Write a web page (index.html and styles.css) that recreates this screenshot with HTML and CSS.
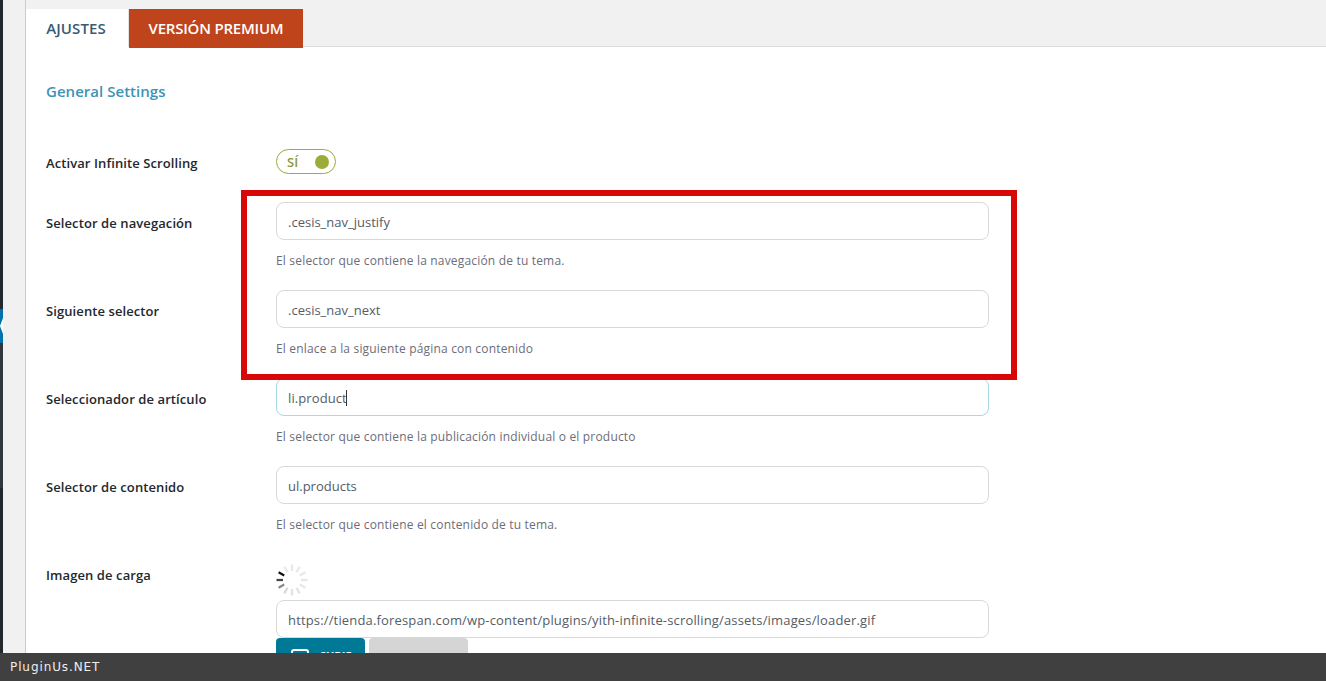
FILE: index.html
```html
<!DOCTYPE html>
<html lang="es">
<head>
<meta charset="utf-8">
<title>Ajustes</title>
<link rel="stylesheet" href="styles.css">
</head>
<body>
<div class="admin">
  <aside class="sidebar">
    <div class="side-top"></div>
    <div class="side-active"></div>
    <div class="side-sub"></div>
    <div class="side-rest"></div>
  </aside>
  <main class="content">
    <nav class="tabs">
      <a class="tab tab-active">AJUSTES</a>
      <a class="tab tab-premium">VERSIÓN PREMIUM</a>
    </nav>
    <section class="panel">
      <h2 class="section-title">General Settings</h2>
      <div class="row row-toggle">
        <label class="label">Activar Infinite Scrolling</label>
        <div class="field">
          <div class="toggle"><span class="toggle-text">SÍ</span><span class="toggle-dot"></span></div>
        </div>
      </div>
      <div class="row">
        <label class="label">Selector de navegación</label>
        <div class="field">
          <div class="input">.cesis_nav_justify</div>
          <p class="hint">El selector que contiene la navegación de tu tema.</p>
        </div>
      </div>
      <div class="row">
        <label class="label">Siguiente selector</label>
        <div class="field">
          <div class="input">.cesis_nav_next</div>
          <p class="hint">El enlace a la siguiente página con contenido</p>
        </div>
      </div>
      <div class="row">
        <label class="label">Seleccionador de artículo</label>
        <div class="field">
          <div class="input input-focus">li.product<span class="caret"></span></div>
          <p class="hint">El selector que contiene la publicación individual o el producto</p>
        </div>
      </div>
      <div class="row">
        <label class="label">Selector de contenido</label>
        <div class="field">
          <div class="input">ul.products</div>
          <p class="hint">El selector que contiene el contenido de tu tema.</p>
        </div>
      </div>
      <div class="row row-image">
        <label class="label">Imagen de carga</label>
        <div class="field">
          <svg class="spinner" width="34" height="34" viewBox="-17 -17 34 34" fill="none" stroke-width="2.2">
            <line x1="0" y1="-15.5" x2="0" y2="-9" stroke="#e8e8e8"/>
            <line x1="7.7" y1="-13.4" x2="4.5" y2="-7.8" stroke="#e8e8e8"/>
            <line x1="13.4" y1="-7.7" x2="7.8" y2="-4.5" stroke="#e8e8e8"/>
            <line x1="15.5" y1="0" x2="9" y2="0" stroke="#e6e6e6"/>
            <line x1="13.4" y1="7.7" x2="7.8" y2="4.5" stroke="#e6e6e6"/>
            <line x1="7.7" y1="13.4" x2="4.5" y2="7.8" stroke="#e2e2e2"/>
            <line x1="0" y1="15.5" x2="0" y2="9" stroke="#e2e2e2"/>
            <line x1="-7.7" y1="13.4" x2="-4.5" y2="7.8" stroke="#d8d8d8"/>
            <line x1="-13.4" y1="7.7" x2="-7.8" y2="4.5" stroke="#888"/>
            <line x1="-15.5" y1="0" x2="-9" y2="0" stroke="#444"/>
            <line x1="-13.4" y1="-7.7" x2="-7.8" y2="-4.5" stroke="#111"/>
            <line x1="-7.7" y1="-13.4" x2="-4.5" y2="-7.8" stroke="#e8e8e8"/>
          </svg>
          <div class="input input-url">https://tienda.forespan.com/wp-content/plugins/yith-infinite-scrolling/assets/images/loader.gif</div>
          <div class="buttons">
            <div class="btn btn-upload">
              <svg class="btn-icon" width="18" height="16" viewBox="0 0 18 16" fill="none" stroke="#fff" stroke-width="2"><rect x="1" y="1" width="16" height="14" rx="2"/></svg>
              <span>SUBIR</span>
            </div>
            <div class="btn btn-reset"></div>
          </div>
        </div>
      </div>
    </section>
  </main>
</div>
<div class="highlight"></div>
<footer class="footer">PluginUs.NET</footer>
</body>
</html>
```

FILE: styles.css
```css
* {
  box-sizing: border-box;
}

html,
body {
  margin: 0;
  height: 681px;
  overflow: hidden;
  background: #f1f1f1;
}

body {
  font-family: "Open Sans", sans-serif;
  font-size: 13px;
  color: #23282d;
}

.admin {
  display: flex;
  height: 681px;
}

.sidebar {
  width: 3px;
  flex: none;
  display: flex;
  flex-direction: column;
  background: #23282d;
}

.side-top {
  height: 309px;
}

.side-active {
  position: relative;
  height: 34px;
  background: #0073aa;
}

.side-active::after {
  content: "";
  position: absolute;
  right: 0;
  top: 9px;
  border-style: solid;
  border-width: 8px 3px 8px 0;
  border-color: transparent #fff transparent transparent;
}

.side-sub {
  height: 145px;
  background: #32373c;
}

.side-rest {
  flex: 1;
}

.content {
  flex: 1;
  margin-left: 22px;
  padding-top: 9px;
  border-left: 1px solid #ccc;
}

.tabs {
  display: flex;
  height: 38px;
  border-bottom: 1px solid #ddd;
}

.tab {
  display: flex;
  align-items: center;
  justify-content: center;
  height: 39px;
  font-size: 15px;
  font-weight: 600;
}

.tab-active {
  width: 103px;
  height: 38px;
  padding-right: 2px;
  border-right: 1px solid #e2e2e2;
  color: #3b5a70;
  background: #fff;
  letter-spacing: 0.1px;
}

.tab-premium {
  width: 174px;
  padding-bottom: 2px;
  color: #fff;
  background: #bf431b;
  letter-spacing: -0.22px;
}

.panel {
  height: 640px;
  padding: 0 0 0 20px;
  background: #fff;
}

.section-title {
  margin: 0;
  padding-top: 34px;
  height: 103px;
  font-size: 15px;
  line-height: 20px;
  font-weight: 600;
  color: #3d93b5;
  letter-spacing: 0.03px;
}

.row {
  display: flex;
  height: 88px;
}

.row-toggle {
  height: 52px;
}

.label {
  width: 230px;
  flex: none;
  padding-top: 12px;
  line-height: 18px;
  font-weight: 600;
  color: #23282d;
  letter-spacing: 0.09px;
}

.row-toggle .label {
  padding-top: 4px;
}

.field {
  width: 713px;
}

.input {
  height: 38px;
  padding: 1px 11px 0;
  border: 1px solid #d8d8d8;
  border-radius: 8px;
  background: #fff;
  font-size: 13px;
  line-height: 36px;
  color: #555c66;
  white-space: nowrap;
}

.input-url {
  letter-spacing: 0.16px;
}

.input-focus {
  border-color: #a6d8e8;
  letter-spacing: 0.1px;
}

.caret {
  display: inline-block;
  width: 1px;
  height: 16px;
  margin-left: -1px;
  vertical-align: -3px;
  background: #333;
}

.hint {
  margin: 12px 0 0;
  font-size: 12px;
  line-height: 18px;
  color: #6d6d78;
  letter-spacing: 0.18px;
}

.toggle {
  display: flex;
  align-items: center;
  justify-content: space-between;
  width: 60px;
  height: 25px;
  margin-top: -1px;
  padding: 0 6px 0 10px;
  border: 1px solid #9dab3a;
  border-radius: 13px;
}

.toggle-text {
  font-size: 13px;
  font-weight: 600;
  color: #8a9a3c;
}

.toggle-dot {
  width: 14px;
  height: 14px;
  border-radius: 50%;
  background: #9dab3a;
}

.row-image {
  height: auto;
}

.spinner {
  display: block;
  margin: 9px 0 3px -1px;
}

.buttons {
  display: flex;
  gap: 4px;
}

.btn {
  height: 34px;
  border-radius: 4px 4px 0 0;
}

.btn-upload {
  display: flex;
  align-items: flex-start;
  gap: 11px;
  width: 89px;
  padding: 11px 0 0 15px;
  background: #007997;
  color: #fff;
  font-size: 11px;
  line-height: 14px;
  font-weight: 700;
}

.btn-icon {
  flex: none;
}

.btn-reset {
  width: 99px;
  background: #d5d5d5;
}

.highlight {
  position: absolute;
  left: 241px;
  top: 190px;
  width: 776px;
  height: 190px;
  border: 6px solid #d80808;
}

.footer {
  position: fixed;
  left: 0;
  right: 0;
  bottom: 0;
  height: 28px;
  padding-left: 10px;
  background: #404040;
  font-family: "DejaVu Sans", sans-serif;
  font-size: 12px;
  line-height: 28px;
  letter-spacing: 0.9px;
  color: #eee;
}
```
